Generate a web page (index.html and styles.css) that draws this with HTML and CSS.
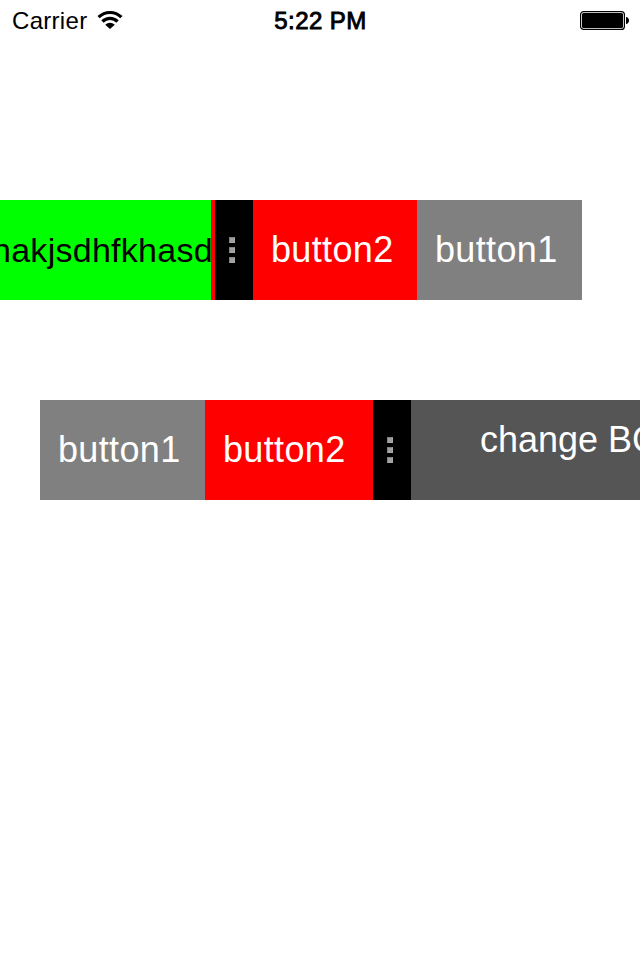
FILE: index.html
```
<!DOCTYPE html>
<html lang="en">
<head>
<meta charset="utf-8">
<title>Swipe menus</title>
<link rel="stylesheet" href="styles.css">
</head>
<body>
<header class="status">
  <div class="network">
    <span class="carrier">Carrier</span>
    <svg class="wifi" width="26" height="20" viewBox="0 0 26 20">
      <g fill="none" stroke="#000" stroke-width="3.2">
        <path d="M1.6 7.2C8 .9 18 .9 24.4 7.2"/>
        <path d="M5.4 11.5C9.8 7.3 16.2 7.3 20.6 11.5"/>
      </g>
      <path d="M13 19 8.2 14.7C11.2 12 14.8 12 17.8 14.7Z"/>
    </svg>
  </div>
  <time class="time">5:22 PM</time>
  <svg class="battery" width="50" height="20" viewBox="0 0 50 20">
    <rect x=".6" y="1.6" width="43.8" height="17.8" rx="3" fill="#fff" stroke="#000" stroke-width="1.2"/>
    <rect x="2" y="3" width="41" height="15" rx="1.5"/>
    <path d="M46 7C50 7.2 50 13.8 46 14Z"/>
  </svg>
</header>
<main>
  <section class="bar bar-left">
    <div class="label label-green"><span>hakjsdhfkhasd</span></div>
    <div class="edge"></div>
    <div class="handle"><i></i><i></i><i></i></div>
    <div class="button red">button2</div>
    <div class="button gray">button1</div>
  </section>
  <section class="bar bar-right">
    <div class="button gray">button1</div>
    <div class="button red wide">button2</div>
    <div class="handle"><i></i><i></i><i></i></div>
    <div class="label label-dark"><span>change BG</span></div>
  </section>
</main>
</body>
</html>
```
FILE: styles.css
```
* { box-sizing: border-box; }
body {
  margin: 0;
  width: 640px;
  height: 960px;
  overflow: hidden;
  background: #fff;
  font-family: "Liberation Sans", Arial, sans-serif;
}
.status {
  display: grid;
  grid-template-columns: 1fr auto 1fr;
  align-items: center;
  height: 40px;
  padding: 1px 10px 0 12px;
  font-size: 24px;
  line-height: 40px;
}
.network { display: flex; align-items: center; gap: 10px; }
.carrier { letter-spacing: .3px; }
.wifi, .battery { margin-bottom: 2px; }
.time {
  margin-left: -1px;
  letter-spacing: .45px;
  -webkit-text-stroke: .9px #000;
}
.battery { justify-self: end; }
main { display: flex; flex-direction: column; gap: 100px; padding-top: 160px; }
.bar {
  display: flex;
  height: 100px;
  font-size: 36px;
  line-height: 100px;
  white-space: nowrap;
}
.bar-right { padding-left: 40px; }
.button {
  flex: none;
  width: 165px;
  padding-left: 18px;
  color: #fff;
  letter-spacing: .35px;
}
.red { width: 164px; background: #f00; }
.wide { width: 168px; }
.gray { background: #808080; }
.edge { flex: none; width: 4px; background: #f00; }
.label { overflow: hidden; }
.label-green {
  flex: none;
  width: 211px;
  background: #0f0;
  color: #000;
  font-size: 34px;
  line-height: 100px;
}
.label-green span { margin-left: -8px; letter-spacing: .27px; }
.label-dark {
  flex: 1;
  padding-left: 69px;
  background: #555;
  color: #fff;
  line-height: 80px;
}
.handle {
  flex: none;
  display: flex;
  flex-direction: column;
  align-items: center;
  justify-content: center;
  gap: 4px;
  width: 38px;
  padding-right: 4px;
  background: #000;
}
.handle i {
  width: 6px;
  height: 6px;
  background: #a0a0a0;
  border: 1px solid;
  border-color: #808080 #a8a8a8 #a8a8a8 #808080;
}
```
